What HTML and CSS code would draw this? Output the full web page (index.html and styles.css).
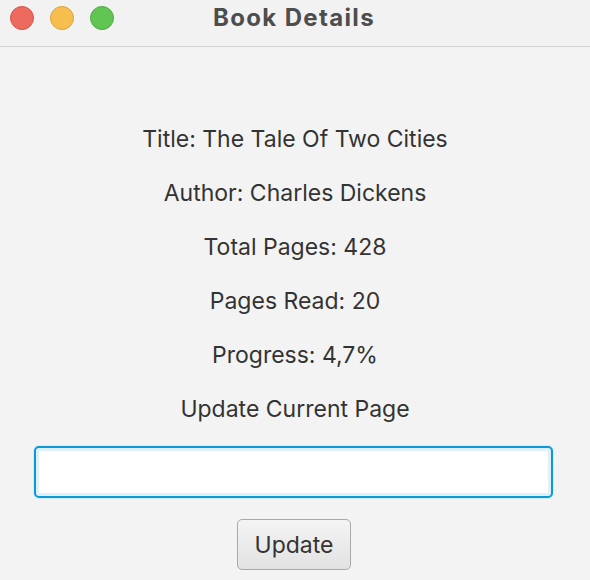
FILE: index.html
```html
<!DOCTYPE html>
<html>
<head>
<meta charset="utf-8">
<link rel="stylesheet" href="styles.css">
</head>
<body>
<div class="window">
  <header class="titlebar">
    <div class="lights">
      <span class="light red"></span>
      <span class="light yellow"></span>
      <span class="light green"></span>
    </div>
    <div class="title">Book Details</div>
  </header>
  <main class="content">
    <div class="line">Title: The Tale Of Two Cities</div>
    <div class="line">Author: Charles Dickens</div>
    <div class="line">Total Pages: 428</div>
    <div class="line">Pages Read: 20</div>
    <div class="line">Progress: 4,7%</div>
    <div class="line">Update Current Page</div>
    <input class="field" type="text">
    <button class="btn">Update</button>
  </main>
</div>
</body>
</html>
```
FILE: styles.css
```css
* { box-sizing: border-box; }
html, body { margin: 0; padding: 0; }
body {
  width: 590px;
  height: 580px;
  background: #f3f3f3;
  font-family: Inter, "Noto Sans", sans-serif;
  overflow: hidden;
}
.window { width: 590px; height: 580px; display: flex; flex-direction: column; }
.titlebar {
  height: 47px;
  background: #f2f2f2;
  border-bottom: 1px solid #d2d2d2;
  position: relative;
  display: flex;
  align-items: center;
  justify-content: center;
}
.lights {
  position: absolute;
  left: 10px;
  top: 6px;
  display: flex;
  gap: 16px;
}
.light {
  width: 24px;
  height: 24px;
  border-radius: 50%;
  display: block;
}
.red { background: #ed6a5e; border: 1px solid #d5544a; }
.yellow { background: #f6be4f; border: 1px solid #dba33a; }
.green { background: #61c554; border: 1px solid #4fab43; }
.title {
  font-weight: 700;
  font-size: 24px;
  letter-spacing: 1.35px;
  color: #4d4d4d;
  margin-top: -12px;
  margin-right: 2px;
}
.content {
  display: flex;
  flex-direction: column;
  align-items: center;
  padding-top: 77px;
}
.line {
  font-size: 23px;
  color: #333333;
  height: 54px;
  line-height: 30px;
}
.field {
  width: 519px;
  height: 52px;
  margin-top: -2px;
  margin-right: 3px;
  border: 2px solid #0a9ad6;
  border-radius: 5px;
  background: #ffffff;
  box-shadow: inset 0 0 0 3px #dff0f8, 0 0 0 1px #d4ecf7;
  outline: none;
}
.btn {
  margin-top: 21px;
  margin-right: 2px;
  width: 114px;
  height: 51px;
  border: 1.5px solid #a9a9a9;
  border-radius: 5px;
  background: linear-gradient(#f4f4f4, #e2e2e2);
  font-family: Inter, "Noto Sans", sans-serif;
  font-size: 23px;
  color: #333333;
  padding: 0;
}
```
